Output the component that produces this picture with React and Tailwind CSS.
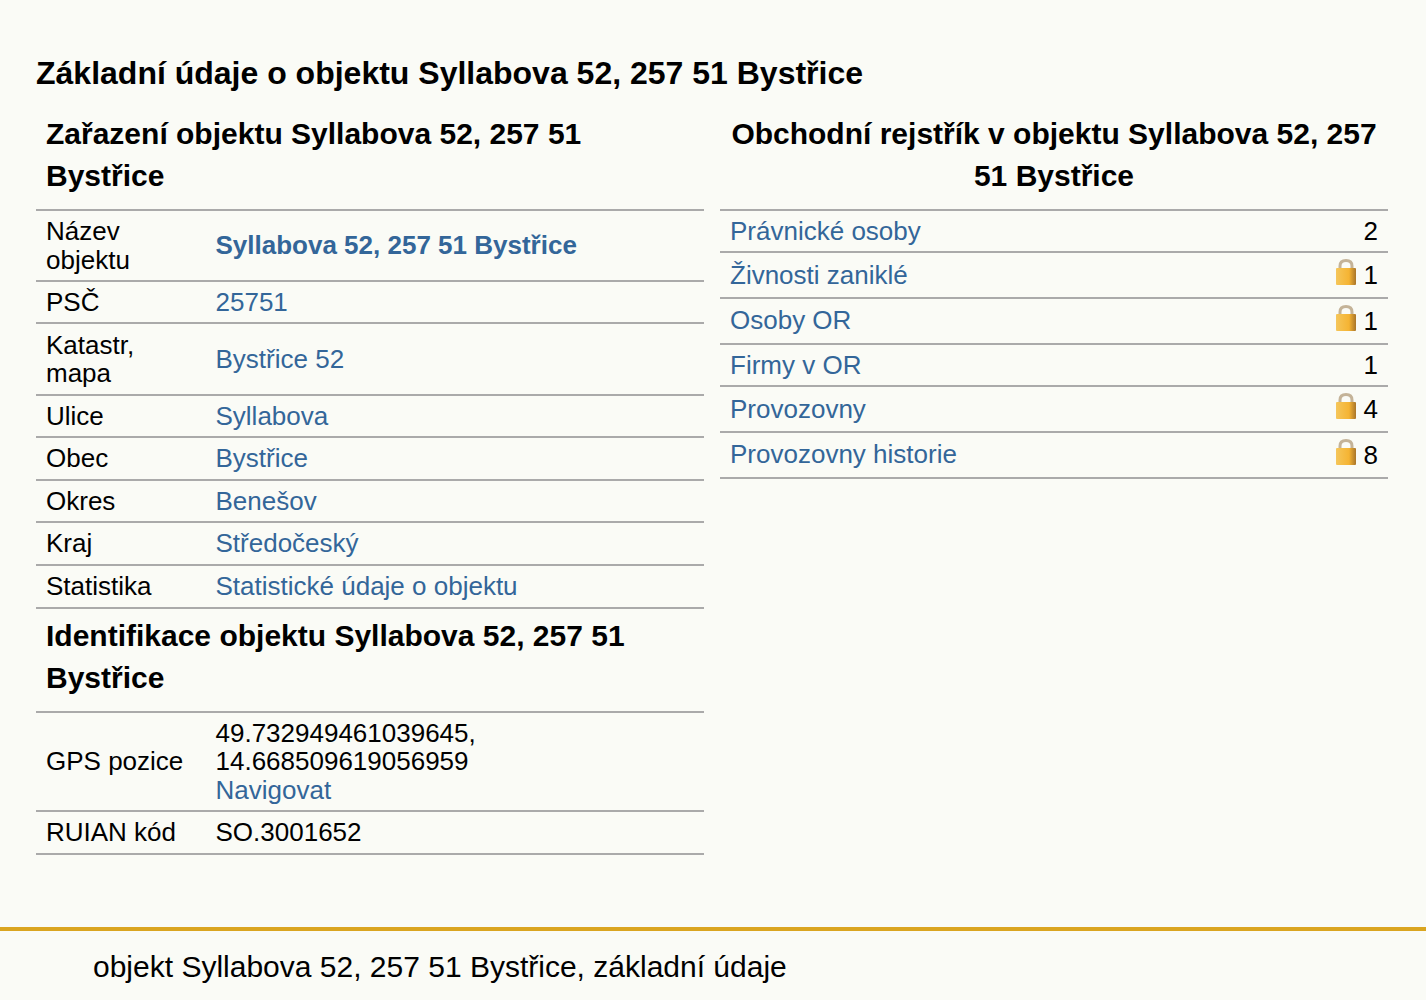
const F = { fontFamily: '"Liberation Sans", Arial, sans-serif' };

function Lock() {
  return (
    <svg width="22" height="28" viewBox="0 0 22 28" className="shrink-0 mb-[6px]">
      <defs>
        <linearGradient id="lb" x1="0" x2="1" y1="0" y2="0">
          <stop offset="0" stopColor="#f5c65a" />
          <stop offset="0.65" stopColor="#f5b433" />
          <stop offset="1" stopColor="#a9752a" />
        </linearGradient>
      </defs>
      <path d="M5 12V8C5 4.200 7.600 2.500 11 2.500S17 4.200 17 8V12" fill="none" stroke="#c4b398" strokeWidth="3" />
      <rect x="1" y="10" width="20" height="17" rx="1" fill="url(#lb)" />
    </svg>
  );
}

function A({ children, bold }) {
  return <a className={`text-[#336699] ${bold ? "font-bold" : ""}`}>{children}</a>;
}

function Row({ label, children, h, labelClass = "" }) {
  return (
    <div className={`flex items-center border-b-2 border-[#aaaaaa] ${h}`}>
      <div className={`w-[179.5px] shrink-0 px-[10px] ${labelClass}`}>{label}</div>
      <div>{children}</div>
    </div>
  );
}

function RRow({ label, value, lock, h, raise }) {
  return (
    <div className={`flex items-center justify-between border-b-2 border-[#aaaaaa] px-[10px] ${h}`}>
      <span className={raise ? "mb-[1px]" : ""}><A>{label}</A></span>
      <span className="flex items-center gap-[7px]">
        {lock && <Lock />}
        <span>{value}</span>
      </span>
    </div>
  );
}

export default function App() {
  return (
    <div style={F} className="bg-[#fafbf6] h-[1000px] text-black text-[26px] leading-[28.5px] flex flex-col overflow-hidden">
      <div className="px-[36px] flex-1">
        <h1 className="text-[32px] font-bold leading-[42px] pt-[52px]">
          Základní údaje o objektu Syllabova 52, 257 51 Bystřice
        </h1>
        <div className="flex gap-[16px] mt-[-2px] w-[1352px]">
          <div className="w-[668px]">
            <h2 className="text-[30px] font-bold leading-[42px] px-[10px] pt-[21px] pb-[12px] border-b-2 border-[#aaaaaa]">
              Zařazení objektu Syllabova 52, 257 51 Bystřice
            </h2>
            <Row h="h-[71px]" label="Název objektu"><A bold>Syllabova 52, 257 51 Bystřice</A></Row>
            <Row h="h-[42px]" label="PSČ"><A>25751</A></Row>
            <Row h="h-[72px]" label="Katastr, mapa"><A>Bystřice 52</A></Row>
            <Row h="h-[42px]" label="Ulice"><A>Syllabova</A></Row>
            <Row h="h-[43px]" label="Obec"><A>Bystřice</A></Row>
            <Row h="h-[42px]" label="Okres"><A>Benešov</A></Row>
            <Row h="h-[43px]" label="Kraj"><A>Středočeský</A></Row>
            <Row h="h-[43px]" label="Statistika"><A>Statistické údaje o objektu</A></Row>
            <h2 className="text-[30px] font-bold leading-[42px] px-[10px] pt-[6px] pb-[12px] border-b-2 border-[#aaaaaa]">
              Identifikace objektu Syllabova 52, 257 51 Bystřice
            </h2>
            <Row h="h-[99px]" label="GPS pozice">
              <div>49.732949461039645,</div>
              <div>14.668509619056959</div>
              <A>Navigovat</A>
            </Row>
            <Row h="h-[43px]" label="RUIAN kód">SO.3001652</Row>
          </div>
          <div className="w-[668px]">
            <h2 className="text-[30px] font-bold leading-[42px] px-[10px] pt-[21px] pb-[12px] text-center border-b-2 border-[#aaaaaa]">
              Obchodní rejstřík v objektu Syllabova 52, 257 51 Bystřice
            </h2>
            <RRow h="h-[42px]" label="Právnické osoby" value="2" />
            <RRow h="h-[46px]" label="Živnosti zaniklé" value="1" lock />
            <RRow h="h-[46px]" label="Osoby OR" value="1" lock raise />
            <RRow h="h-[42px]" label="Firmy v OR" value="1" />
            <RRow h="h-[46px]" label="Provozovny" value="4" lock />
            <RRow h="h-[46px]" label="Provozovny historie" value="8" lock raise />
          </div>
        </div>
      </div>
      <div className="border-t-4 border-[#daa520] h-[73px] pl-[93px] pt-[19px] text-[30px] leading-[34px]">
        objekt Syllabova 52, 257 51 Bystřice, základní údaje
      </div>
    </div>
  );
}
